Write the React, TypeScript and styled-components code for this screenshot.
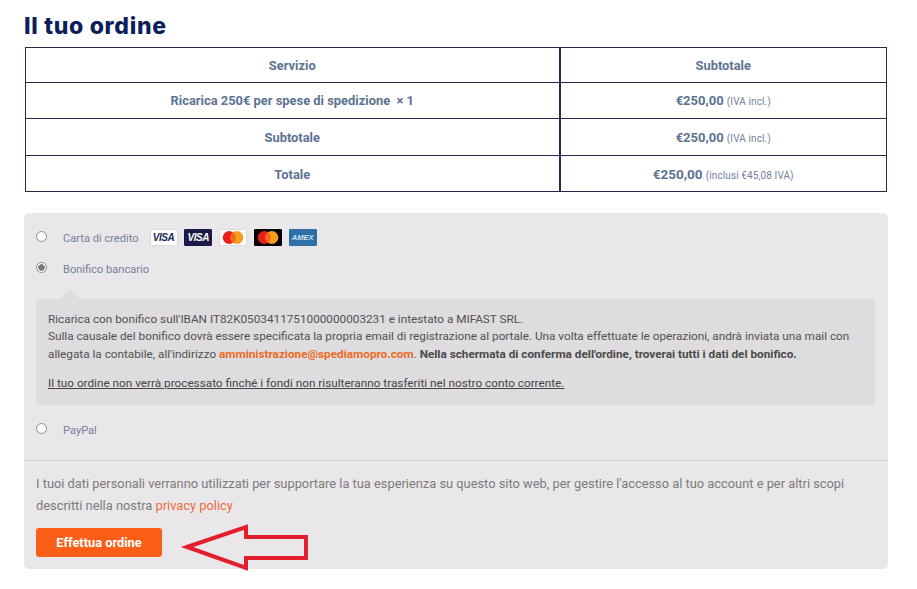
import React from 'react'
import styled, { createGlobalStyle } from 'styled-components'

const GlobalStyle = createGlobalStyle`
    html, body {
        margin: 0;
        padding: 0;
        background: #fff;
        font-family: Roboto, "Liberation Sans", sans-serif;
    }
`

const rows = [
    { name: 'Ricarica 250€ per spese di spedizione  × 1', note: '(IVA incl.)', shift: 0 },
    { name: 'Subtotale', note: '(IVA incl.)', shift: 1 },
    { name: 'Totale', note: '(inclusi €45,08 IVA)', total: true, shift: 1 },
]

const App = () => {
    return (
        <Page>
            <GlobalStyle />
            <Title>Il tuo ordine</Title>
            <OrderTable>
                <colgroup>
                    <col style={{ width: 534 }} />
                    <col />
                </colgroup>
                <thead>
                    <tr>
                        <HeadCell>Servizio</HeadCell>
                        <HeadCell $right>Subtotale</HeadCell>
                    </tr>
                </thead>
                <tbody>
                    {rows.map(row => (
                        <tr key={row.name}>
                            <Cell $shift={row.shift}>{row.name}</Cell>
                            <Cell $right $shift={row.shift}>
                                <Price $total={row.total}>€250,00</Price> <Note>{row.note}</Note>
                            </Cell>
                        </tr>
                    ))}
                </tbody>
            </OrderTable>

            <Panel>
                <Methods>
                    <Method>
                        <Radio />
                        <MethodLabel>Carta di credito</MethodLabel>
                        <Cards>
                            <Card $bg="#fff" $border="#d9d9d9">
                                <VisaText $color="#1a2a5e">VISA</VisaText>
                            </Card>
                            <Card $bg="#1a1a48">
                                <VisaText $color="#fff">VISA</VisaText>
                            </Card>
                            <Card $bg="#fff" $border="#d9d9d9">
                                <MasterMark />
                            </Card>
                            <Card $bg="#000">
                                <MasterMark />
                            </Card>
                            <Card $bg="#2f6fa8">
                                <AmexText>AMEX</AmexText>
                            </Card>
                        </Cards>
                    </Method>
                    <Method $top={7}>
                        <Radio $checked />
                        <MethodLabel>Bonifico bancario</MethodLabel>
                    </Method>
                    <Description>
                        <p>
                            Ricarica con bonifico sull'IBAN IT82K0503411751000000003231 e intestato a MIFAST SRL.
                            <br />
                            Sulla causale del bonifico dovrà essere specificata la propria email di registrazione al portale. Una volta effettuate le operazioni, andrà inviata una mail con allegata la contabile, all'indirizzo{' '}
                            <Email>amministrazione@spediamopro.com</Email>.{' '}
                            <strong>Nella schermata di conferma dell'ordine, troverai tutti i dati del bonifico.</strong>
                        </p>
                        <p><u>Il tuo ordine non verrà processato finché i fondi non risulteranno trasferiti nel nostro conto corrente.</u></p>
                    </Description>
                    <Method $top={13}>
                        <Radio />
                        <MethodLabel>PayPal</MethodLabel>
                    </Method>
                </Methods>
                <PlaceOrder>
                    <Privacy>
                        I tuoi dati personali verranno utilizzati per supportare la tua esperienza su questo sito web, per gestire l'accesso al tuo account e per altri scopi descritti nella nostra <PrivacyLink>privacy policy</PrivacyLink>
                    </Privacy>
                    <OrderButton>Effettua ordine</OrderButton>
                    <Arrow width="126" height="48" viewBox="0 0 126 48">
                        <path
                            d="M4 23 L63 3 L63 13 L123 13 L123 34 L63 34 L63 44 Z"
                            fill="none"
                            stroke="#e41e2b"
                            strokeWidth="4"
                            strokeLinejoin="miter"
                        />
                    </Arrow>
                </PlaceOrder>
            </Panel>
        </Page>
    )
}

const MasterMark = () => (
    <svg width="24" height="15" viewBox="0 0 24 15">
        <circle cx="8.2" cy="7.5" r="6.5" fill="#e8201c" />
        <circle cx="15.8" cy="7.5" r="6.5" fill="#f59e1e" />
        <path d="M12 2.2a6.5 6.5 0 0 1 0 10.6a6.5 6.5 0 0 1 0-10.6z" fill="#f4661e" />
    </svg>
)

const Page = styled.div`
    width: 917px;
    height: 589px;
    box-sizing: border-box;
    padding: 14px 29px 0 24px;
    overflow: hidden;
`

const Title = styled.h2`
    margin: 0 0 8px;
    height: 25px;
    font-family: Inter, "Liberation Sans", sans-serif;
    font-size: 23px;
    line-height: 25px;
    font-weight: 800;
    letter-spacing: 0.7px;
    color: #0c1f5c;
`

const OrderTable = styled.table`
    width: 862px;
    margin-left: 1px;
    border-collapse: collapse;
    table-layout: fixed;
    color: #5b7391;
    font-size: 12.9px;
    font-weight: 700;
`

const Cell = styled.td<{ $right?: boolean; $shift?: number }>`
    height: 36.25px;
    padding: ${p => (p.$shift ?? 0) * 2}px 0 0;
    box-sizing: border-box;
    text-align: center;
    white-space: pre-wrap;
    border: 1px solid #1f2a50;
    border-left-width: ${p => (p.$right ? '2px' : '1px')};
`

const HeadCell = styled.th<{ $right?: boolean }>`
    height: 35px;
    padding: 0;
    box-sizing: border-box;
    text-align: center;
    font-weight: 700;
    border: 1px solid #1f2a50;
    border-left-width: ${p => (p.$right ? '2px' : '1px')};
`

const Price = styled.span<{ $total?: boolean }>`
    font-size: ${p => (p.$total ? '13.5px' : '13px')};
`

const Note = styled.small`
    font-size: 10px;
    font-weight: 400;
    color: #6f8299;
    letter-spacing: 0.1px;
`

const Panel = styled.div`
    margin-top: 21px;
    width: 864px;
    height: 356px;
    background: #e9e7e9;
    border-radius: 5px;
    box-sizing: border-box;
`

const Methods = styled.div`
    height: 248px;
    box-sizing: border-box;
    padding: 13px 13px 0 12px;
    border-bottom: 1px solid #d3d1d4;
`

const Method = styled.div<{ $top?: number }>`
    display: flex;
    align-items: center;
    height: 24px;
    margin-top: ${p => p.$top ?? 0}px;
`

const Radio = styled.span<{ $checked?: boolean }>`
    width: 9px;
    height: 9px;
    border: 1px solid #8b8b8b;
    border-radius: 50%;
    background: ${p => (p.$checked ? 'radial-gradient(circle, #7b7b7b 0 3px, #fff 3.6px)' : '#fff')};
    transform: translateY(-1px);
`

const MethodLabel = styled.span`
    margin-left: 16px;
    padding-top: 2px;
    font-size: 11.1px;
    color: #74809b;
`

const Cards = styled.span`
    display: flex;
    gap: 6.75px;
    margin-left: 11px;
`

const Card = styled.span<{ $bg: string; $border?: string }>`
    display: flex;
    align-items: center;
    justify-content: center;
    width: 28px;
    height: 17px;
    box-sizing: border-box;
    background: ${p => p.$bg};
    border: 1px solid ${p => p.$border ?? p.$bg};
    border-radius: 1px;
`

const VisaText = styled.span<{ $color: string }>`
    font-family: "Liberation Sans", sans-serif;
    font-size: 10px;
    font-weight: 700;
    font-style: italic;
    letter-spacing: -0.4px;
    color: ${p => p.$color};
`

const AmexText = styled.span`
    font-family: "Liberation Sans", sans-serif;
    font-size: 7.5px;
    font-weight: 700;
    font-style: italic;
    color: #cfe2f3;
`

const Description = styled.div`
    position: relative;
    margin-top: 18px;
    height: 106px;
    box-sizing: border-box;
    padding: 12px 12px 0;
    background: #dedcde;
    border-radius: 2px;
    font-size: 11.75px;
    line-height: 17.5px;
    color: #515151;

    p {
        margin: 0 0 12px;
    }

    strong {
        font-weight: 700;
        color: #4a4a4a;
    }

    u {
        color: #444;
    }

    &::before {
        content: '';
        position: absolute;
        top: -10px;
        left: 24px;
        border-left: 10px solid transparent;
        border-right: 10px solid transparent;
        border-bottom: 10px solid #dedcde;
    }
`

const Email = styled.strong`
    && {
        color: #ee6a23;
    }
`

const PlaceOrder = styled.div`
    position: relative;
    padding: 12px 12px 0;
`

const Privacy = styled.p`
    margin: 0;
    font-size: 12.85px;
    line-height: 22px;
    color: #7b7b7b;
`

const PrivacyLink = styled.span`
    color: #ee6a3c;
`

const OrderButton = styled.button`
    display: block;
    width: 126px;
    height: 29px;
    margin-top: 11px;
    padding: 0;
    border: none;
    border-radius: 3px;
    background: #fb5e17;
    color: #fff;
    font-family: Roboto, "Liberation Sans", sans-serif;
    font-size: 12.8px;
    font-weight: 700;
`

const Arrow = styled.svg`
    position: absolute;
    left: 159px;
    top: 63px;
    overflow: visible;
`

export default App
